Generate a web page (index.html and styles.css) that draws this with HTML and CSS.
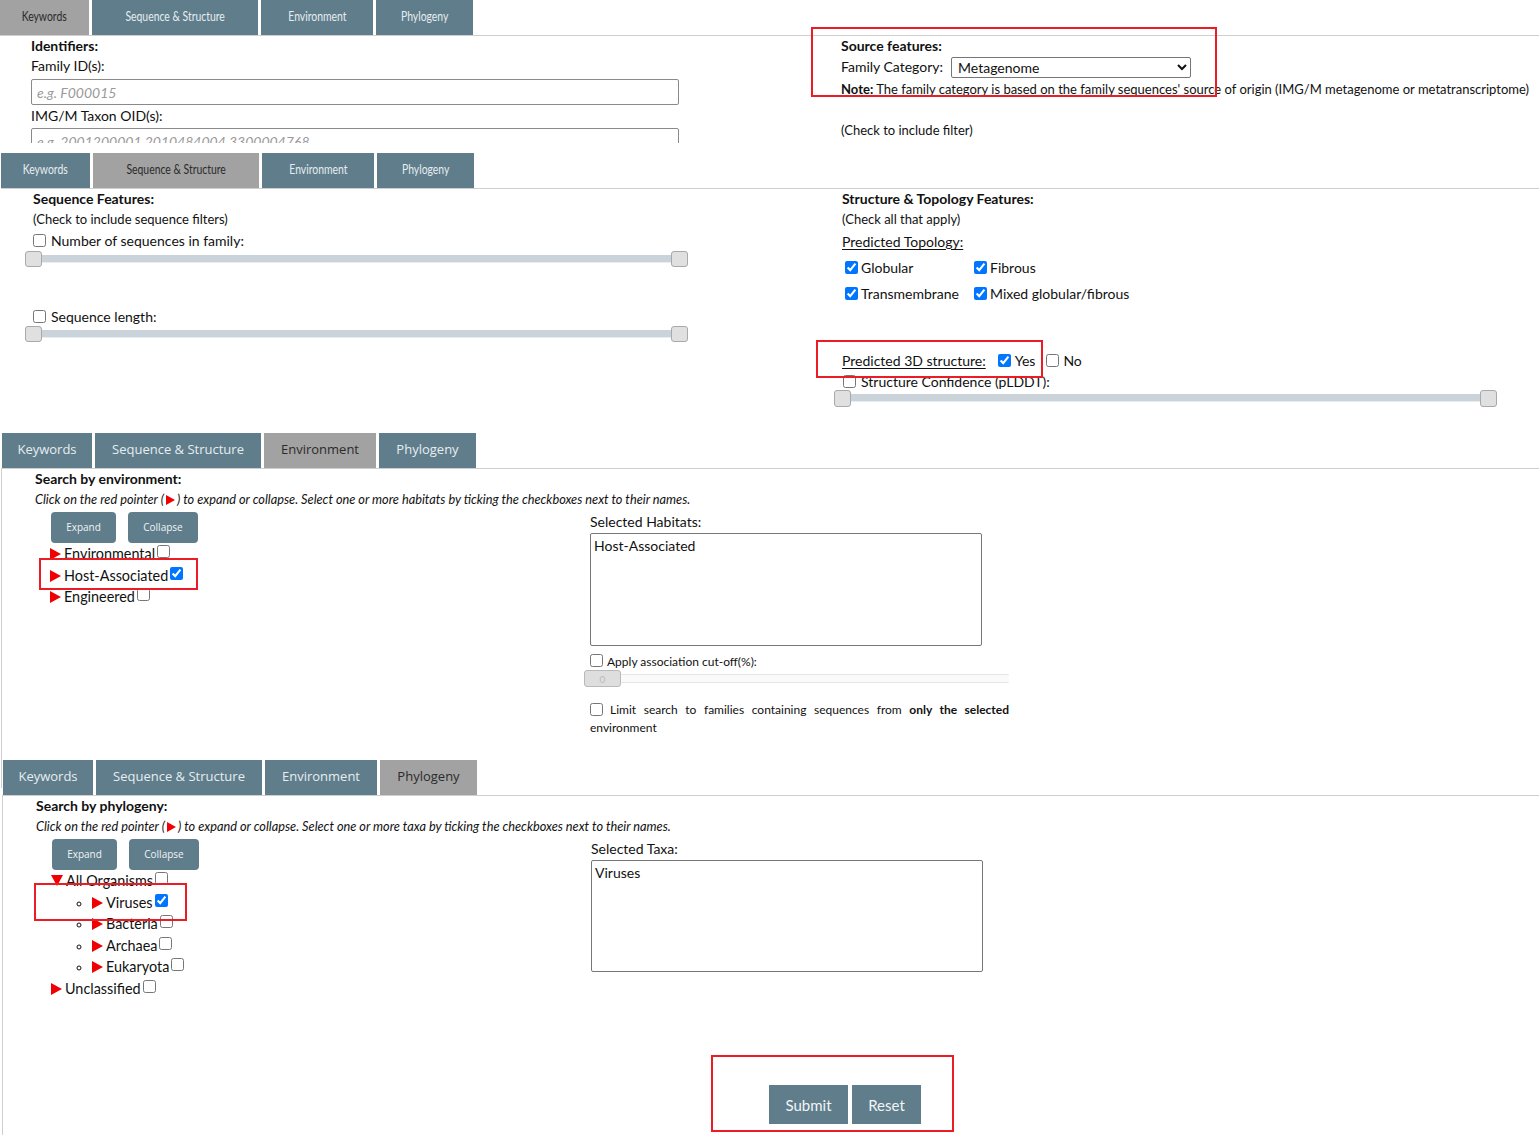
FILE: index.html
```html
<!DOCTYPE html>
<html lang="en">
<head>
<meta charset="utf-8">
<title>Family search</title>
<link rel="stylesheet" href="styles.css">
</head>
<body>

<section class="panel p1">
  <nav class="tabs narrow">
    <span class="tab active w-kw"><span class="tl">Keywords</span></span>
    <span class="tab w-seq"><span class="tl">Sequence &amp; Structure</span></span>
    <span class="tab w-env"><span class="tl">Environment</span></span>
    <span class="tab w-phy"><span class="tl">Phylogeny</span></span>
  </nav>
  <div class="pane kw-pane">
    <div class="col">
      <div class="row b">Identifiers:</div>
      <div class="row">Family ID(s):</div>
      <input class="text-in first" type="text" placeholder="e.g. F000015">
      <div class="row lbl2">IMG/M Taxon OID(s):</div>
      <input class="text-in second" type="text" placeholder="e.g. 2001200001,2010484004,3300004768">
    </div>
    <div class="col">
      <div class="row b">Source features:</div>
      <div class="row cat-row">Family Category: <select class="cat"><option>Metagenome</option></select></div>
      <div class="note"><b>Note:</b> The family category is based on the family sequences' source of origin (IMG/M metagenome or metatranscriptome)</div>
      <div class="row small filter-note">(Check to include filter)</div>
    </div>
  </div>
  <div class="annot a1"></div>
</section>

<section class="panel p2">
  <nav class="tabs narrow">
    <span class="tab w-kw"><span class="tl">Keywords</span></span>
    <span class="tab active w-seq"><span class="tl">Sequence &amp; Structure</span></span>
    <span class="tab w-env"><span class="tl">Environment</span></span>
    <span class="tab w-phy"><span class="tl">Phylogeny</span></span>
  </nav>
  <div class="pane ss-pane">
    <div class="col">
      <div class="row b">Sequence Features:</div>
      <div class="row small">(Check to include sequence filters)</div>
      <label class="row cb-row"><input type="checkbox">Number of sequences in family:</label>
      <div class="range"><span class="handle"></span><span class="handle"></span></div>
      <label class="row cb-row len-row"><input type="checkbox">Sequence length:</label>
      <div class="range len-range"><span class="handle"></span><span class="handle"></span></div>
    </div>
    <div class="col">
      <div class="row b">Structure &amp; Topology Features:</div>
      <div class="row small">(Check all that apply)</div>
      <div class="row u topo-title">Predicted Topology:</div>
      <div class="topo">
        <label><input type="checkbox" checked>Globular</label>
        <label><input type="checkbox" checked>Fibrous</label>
        <label><input type="checkbox" checked>Transmembrane</label>
        <label><input type="checkbox" checked>Mixed globular/fibrous</label>
      </div>
      <div class="row three-d"><span class="u">Predicted 3D structure:</span><label class="yes"><input type="checkbox" checked>Yes</label><label class="no"><input type="checkbox">No</label></div>
      <label class="row cb-row conf-row"><input type="checkbox">Structure Confidence (pLDDT):</label>
      <div class="range conf-range"><span class="handle"></span><span class="handle"></span></div>
    </div>
  </div>
  <div class="annot a2"></div>
</section>

<section class="panel p3">
  <nav class="tabs wide">
    <span class="tab w-kw">Keywords</span>
    <span class="tab w-seq">Sequence &amp; Structure</span>
    <span class="tab active w-env">Environment</span>
    <span class="tab w-phy">Phylogeny</span>
  </nav>
  <div class="pane tree-pane">
    <div class="row b">Search by environment:</div>
    <div class="hint">Click on the red pointer (<span class="ptr mini"></span>) to expand or collapse. Select one or more habitats by ticking the checkboxes next to their names.</div>
    <div class="tree-grid">
      <div class="tree-col">
        <div class="btns"><button class="btn-sm">Expand</button><button class="btn-sm">Collapse</button></div>
        <ul class="tree">
          <li><span class="ptr"></span>Environmental<input type="checkbox"></li>
          <li><span class="ptr"></span>Host-Associated<input type="checkbox" checked></li>
          <li><span class="ptr"></span>Engineered<input type="checkbox"></li>
        </ul>
      </div>
      <div class="sel-col">
        <div class="row">Selected Habitats:</div>
        <div class="sel-box">Host-Associated</div>
        <label class="row tiny cut-row"><input type="checkbox">Apply association cut-off(%):</label>
        <div class="cut-range"><span class="cut-handle">0</span></div>
        <p class="limit"><input type="checkbox">Limit search to families containing sequences from <b>only the selected</b> environment</p>
      </div>
    </div>
  </div>
  <div class="annot a3"></div>
</section>

<section class="panel p4">
  <nav class="tabs wide">
    <span class="tab w-kw">Keywords</span>
    <span class="tab w-seq">Sequence &amp; Structure</span>
    <span class="tab w-env">Environment</span>
    <span class="tab active w-phy">Phylogeny</span>
  </nav>
  <div class="pane tree-pane">
    <div class="row b">Search by phylogeny:</div>
    <div class="hint">Click on the red pointer (<span class="ptr mini"></span>) to expand or collapse. Select one or more taxa by ticking the checkboxes next to their names.</div>
    <div class="tree-grid">
      <div class="tree-col">
        <div class="btns"><button class="btn-sm">Expand</button><button class="btn-sm">Collapse</button></div>
        <ul class="tree">
          <li><span class="ptr down"></span>All Organisms<input type="checkbox">
            <ul class="sub">
              <li><span class="ptr"></span>Viruses<input type="checkbox" checked></li>
              <li><span class="ptr"></span>Bacteria<input type="checkbox"></li>
              <li><span class="ptr"></span>Archaea<input type="checkbox"></li>
              <li><span class="ptr"></span>Eukaryota<input type="checkbox"></li>
            </ul>
          </li>
          <li><span class="ptr"></span>Unclassified<input type="checkbox"></li>
        </ul>
      </div>
      <div class="sel-col">
        <div class="row">Selected Taxa:</div>
        <div class="sel-box taxa">Viruses</div>
      </div>
    </div>
    <div class="actions">
      <button class="btn-lg submit">Submit</button><button class="btn-lg reset">Reset</button>
    </div>
  </div>
  <div class="annot a4"></div>
  <div class="annot a5"></div>
</section>

</body>
</html>
```

FILE: styles.css
```css
* { box-sizing: border-box; }

body {
  margin: 0;
  background: #fff;
  color: #111;
  font-family: Lato, "Open Sans", sans-serif;
  font-size: 14px;
}

.panel { position: relative; }
.p1 { height: 143px; overflow: hidden; margin-bottom: 10px; }
.p2 { height: 280px; margin-left: 1px; }
.p3 { height: 319px; margin-left: 1px; margin-bottom: 8px; }
.p4 { height: 375px; margin-left: 2px; overflow: hidden; }

/* tabs */
.tabs {
  display: flex;
  gap: 3px;
  border-bottom: 1px solid #cfcfcf;
}
.tabs.wide { padding-left: 1px; }
.tab {
  height: 35px;
  display: flex;
  align-items: center;
  justify-content: center;
  padding-bottom: 3px;
  background: #607d8b;
  color: #e6edf0;
  white-space: nowrap;
}
.tab.active { background: #a2a2a2; color: #2b2b2b; }
.narrow .tab { font-family: Lato, sans-serif; font-size: 13px; padding-bottom: 4px; }
.narrow .tl { display: inline-block; transform: scaleX(0.8); }
.wide .tab { font-family: "Open Sans", sans-serif; font-size: 13px; }
.w-kw { width: 90px; }
.narrow .w-kw { width: 89px; }
.w-seq { width: 166px; }
.w-env { width: 112px; }
.w-phy { width: 97px; }

/* shared rows */
.row { line-height: 20px; }
.b { font-weight: 700; }
.u { text-decoration: underline; text-underline-offset: 2px; }
.small { font-size: 13px; line-height: 21px; }
.tiny { font-size: 12px; }

input[type="checkbox"] {
  width: 13px;
  height: 13px;
  margin: 0 4px 0 0;
  vertical-align: -1px;
}

/* panel 1 */
.kw-pane {
  display: grid;
  grid-template-columns: 810px 1fr;
  padding-left: 31px;
}
.text-in {
  display: block;
  width: 648px;
  height: 26px;
  border: 1px solid #8a8a8a;
  border-radius: 2px;
  padding: 0 5px;
  font-family: Lato, sans-serif;
  font-size: 14px;
}
.text-in::placeholder { color: #9a9a9a; font-style: italic; }
.text-in.first { margin-top: 3px; }
.lbl2 { margin-top: 1px; }
.text-in.second { margin-top: 2px; }
.cat-row { line-height: 22px; display: flex; align-items: center; height: 22px; }
.cat {
  margin-left: 8px;
  width: 240px;
  height: 21px;
  font-family: Lato, sans-serif;
  font-size: 14px;
  color: #111;
  border: 1px solid #767676;
  border-radius: 2px;
  background: #fff;
  padding: 0 2px;
}
.note { font-size: 13px; line-height: 22px; white-space: nowrap; }
.filter-note { margin-top: 20px; }

/* panel 2 */
.ss-pane {
  display: grid;
  grid-template-columns: 809px 1fr;
  padding-left: 32px;
}
.cb-row { display: block; line-height: 21px; }
.cb-row input { margin-right: 5px; }
.range {
  display: flex;
  justify-content: space-between;
  width: 663px;
  height: 16px;
  margin-left: -8px;
  background: linear-gradient(to bottom, transparent 4px, #c9d3d9 4px, #c9d3d9 11px, #e8edf0 11px, #e8edf0 12px, transparent 12px);
}
.handle {
  width: 17px;
  height: 16px;
  background: #e0e0e0;
  border: 1px solid #a9a9a9;
  border-radius: 3px;
}
.len-row { margin-top: 40px; line-height: 19px; }
.topo-title { margin-top: 2px; }
.topo {
  display: grid;
  grid-template-columns: 129px auto;
  grid-auto-rows: 26px;
  margin-top: 2px;
  align-items: center;
  width: 320px;
}
.topo input { margin-left: 3px; margin-right: 3px; }
.three-d { margin-top: 45px; display: flex; align-items: center; }
.three-d .yes { margin-left: 12px; }
.three-d .no { margin-left: 11px; }
.conf-row input { margin-left: 1px; }
.conf-range { margin-top: -2px; height: 17px; }
.conf-range .handle { height: 17px; }

/* tree panels */
.tree-pane {
  border-left: 1px solid #cfcfcf;
  padding-left: 33px;
  height: 100%;
}
.hint { font-size: 12.75px; font-style: italic; line-height: 21px; white-space: nowrap; }
.ptr {
  display: inline-block;
  width: 0;
  height: 0;
  border-left: 11px solid #f00000;
  border-top: 6px solid transparent;
  border-bottom: 6px solid transparent;
  margin-right: 3px;
  vertical-align: -1px;
}
.ptr.mini {
  border-left-width: 9px;
  border-top-width: 5px;
  border-bottom-width: 5px;
  margin: 0 2px;
  vertical-align: -1px;
}
.ptr.down {
  border-left: 6px solid transparent;
  border-right: 6px solid transparent;
  border-top: 11px solid #f00000;
  border-bottom: 0;
  margin-right: 3px;
  vertical-align: 0;
}
.tree-grid {
  display: grid;
  grid-template-columns: 555px 420px;
  margin-top: 2px;
}
.btns { display: flex; gap: 12px; padding-left: 16px; }
.btn-sm {
  height: 31px;
  border: 0;
  border-radius: 4px;
  background: #607d8b;
  color: #f1f4f6;
  font-family: "Open Sans", sans-serif;
  font-size: 10px;
  padding: 0 0 2px;
}
.btn-sm:first-child { width: 65px; }
.btn-sm:last-child { width: 70px; }
.tree {
  list-style: none;
  margin: 0;
  padding-left: 15px;
  font-size: 14.4px;
  line-height: 21.5px;
}
.tree input[type="checkbox"] {
  margin: 2px 0 0 2px;
  vertical-align: top;
}
.tree .sub {
  list-style: circle;
  padding-left: 41px;
  margin: 0;
}
.tree .sub li::marker { font-size: 13px; }

.sel-col .row { line-height: 20px; }
.sel-box {
  margin-top: 1px;
  width: 392px;
  height: 113px;
  border: 1px solid #777;
  border-radius: 2px;
  padding: 2px 3px;
  font-size: 14px;
  line-height: 20px;
}
.sel-box.taxa { height: 112px; }
.cut-row { display: block; margin-top: 6px; }
.cut-range {
  position: relative;
  margin-top: -2px;
  margin-left: -6px;
  width: 425px;
  height: 17px;
  background: linear-gradient(to bottom, transparent 4px, #e6e6e6 4px, #e6e6e6 5px, #fafafa 5px, #fafafa 12px, #e6e6e6 12px, #e6e6e6 13px, transparent 13px);
  border-radius: 6px;
}
.cut-handle {
  display: flex;
  align-items: center;
  justify-content: center;
  width: 37px;
  height: 17px;
  background: #dedede;
  border: 1px solid #b9b9b9;
  border-radius: 3px;
  color: #bcbcbc;
  font-size: 10px;
}
.limit {
  margin: 14px 0 0;
  width: 419px;
  font-size: 12px;
  line-height: 18px;
  text-align: justify;
  text-align-last: left;
}
.limit input { margin-right: 7px; vertical-align: -2px; }

.actions { display: flex; gap: 4px; margin: 86px 0 0 733px; }
.btn-lg {
  height: 39px;
  border: 0;
  background: #607d8b;
  color: #f1f4f6;
  font-family: Lato, sans-serif;
  font-size: 15px;
  padding: 0;
}
.submit { width: 79px; }
.reset { width: 69px; }

/* red annotation frames */
.annot { position: absolute; border: 2px solid #ec1c24; pointer-events: none; }
.a1 { left: 811px; top: 27px; width: 406px; height: 70px; }
.a2 { left: 815px; top: 187px; width: 227px; height: 38px; }
.a3 { left: 38px; top: 125px; width: 159px; height: 32px; }
.a4 { left: 32px; top: 123px; width: 153px; height: 38px; }
.a5 { left: 709px; top: 295px; width: 243px; height: 77px; }
```
